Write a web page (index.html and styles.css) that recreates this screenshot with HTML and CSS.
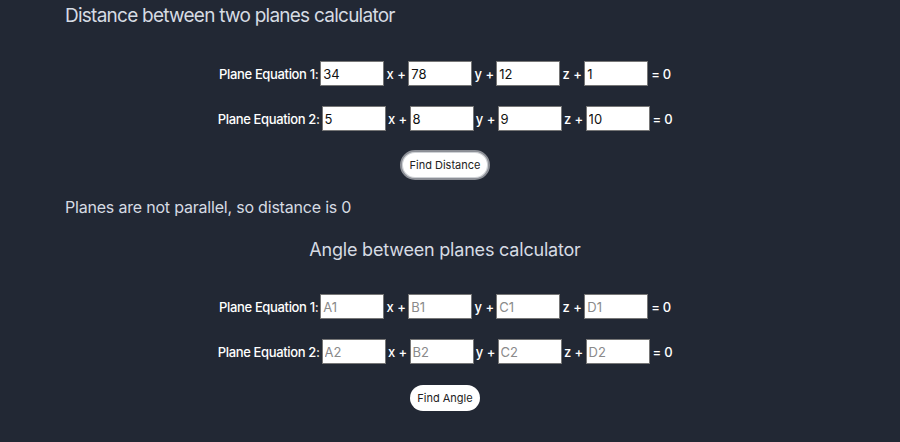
FILE: index.html
```html
<!DOCTYPE html>
<html>
<head>
<meta charset="utf-8">
<link rel="stylesheet" href="styles.css">
</head>
<body>
<div class="page">
  <h1 class="title">Distance between two planes calculator</h1>
  <div class="form">
    <div class="row">
      <label class="label">Plane Equation 1:</label>
      <input class="field" value="34"><span class="op">x +</span>
      <input class="field" value="78"><span class="op">y +</span>
      <input class="field" value="12"><span class="op">z +</span>
      <input class="field" value="1"><span class="op eq">= 0</span>
    </div>
    <div class="row">
      <label class="label">Plane Equation 2:</label>
      <input class="field" value="5"><span class="op">x +</span>
      <input class="field" value="8"><span class="op">y +</span>
      <input class="field" value="9"><span class="op">z +</span>
      <input class="field" value="10"><span class="op eq">= 0</span>
    </div>
    <button class="btn btn-focus">Find Distance</button>
  </div>
  <p class="result">Planes are not parallel, so distance is 0</p>
  <h2 class="subtitle">Angle between planes calculator</h2>
  <div class="form form2">
    <div class="row">
      <label class="label">Plane Equation 1:</label>
      <input class="field" placeholder="A1"><span class="op">x +</span>
      <input class="field" placeholder="B1"><span class="op">y +</span>
      <input class="field" placeholder="C1"><span class="op">z +</span>
      <input class="field" placeholder="D1"><span class="op eq">= 0</span>
    </div>
    <div class="row">
      <label class="label">Plane Equation 2:</label>
      <input class="field" placeholder="A2"><span class="op">x +</span>
      <input class="field" placeholder="B2"><span class="op">y +</span>
      <input class="field" placeholder="C2"><span class="op">z +</span>
      <input class="field" placeholder="D2"><span class="op eq">= 0</span>
    </div>
    <button class="btn btn-plain">Find Angle</button>
  </div>
</div>
</body>
</html>
```
FILE: styles.css
```css
html, body {
  margin: 0;
  padding: 0;
  background: #222834;
  height: 100%;
}
body {
  font-family: Inter, "Liberation Sans", sans-serif;
  color: #d6dbe3;
}
.page {
  width: 760px;
  padding-left: 65px;
  box-sizing: content-box;
}
.title {
  font-size: 19px;
  font-weight: 400;
  margin: 0;
  padding-top: 5px;
  line-height: 22px;
  letter-spacing: -0.75px;
}
.form {
  display: flex;
  flex-direction: column;
  align-items: center;
  gap: 20px;
  padding-top: 34px;
}
.row {
  display: flex;
  align-items: center;
  height: 25px;
}
.label {
  font-size: 13px;
  font-weight: 500;
  color: #ffffff;
  margin-right: 2px;
  letter-spacing: -0.35px;
}
.field {
  width: 64px;
  height: 25px;
  box-sizing: border-box;
  border: 1px solid #767676;
  background: #ffffff;
  font-family: Inter, "Liberation Sans", sans-serif;
  font-size: 13px;
  color: #111;
  padding: 0 2px;
  margin: 0;
  outline: none;
}
.field::placeholder {
  color: #8a8a8a;
}
.op {
  font-size: 13px;
  font-weight: 500;
  color: #ffffff;
  width: 24px;
  text-align: center;
}
.op.eq {
  width: auto;
  margin-left: 3px;
  letter-spacing: -0.3px;
}
.btn {
  font-family: Inter, "Liberation Sans", sans-serif;
  font-size: 11px;
  color: #222;
  background: #ffffff;
  border: none;
  border-radius: 14px;
  height: 26px;
  padding: 0 7px;
}
.btn-plain {
  margin-top: 1px;
}
.btn-focus {
  height: 30px;
  padding: 0 8px;
  border-radius: 15px;
  border: 2px solid #8d9097;
  box-shadow: inset 0 0 0 1px #cfd2d6;
  margin-top: -1px;
}
.result {
  font-size: 16px;
  margin: 17px 0 0;
  line-height: 20px;
  letter-spacing: -0.2px;
}
.subtitle {
  font-size: 18px;
  font-weight: 400;
  text-align: center;
  margin: 22px 0 0;
  line-height: 22px;
  letter-spacing: -0.2px;
}
.form2 {
  padding-top: 33px;
}
```
